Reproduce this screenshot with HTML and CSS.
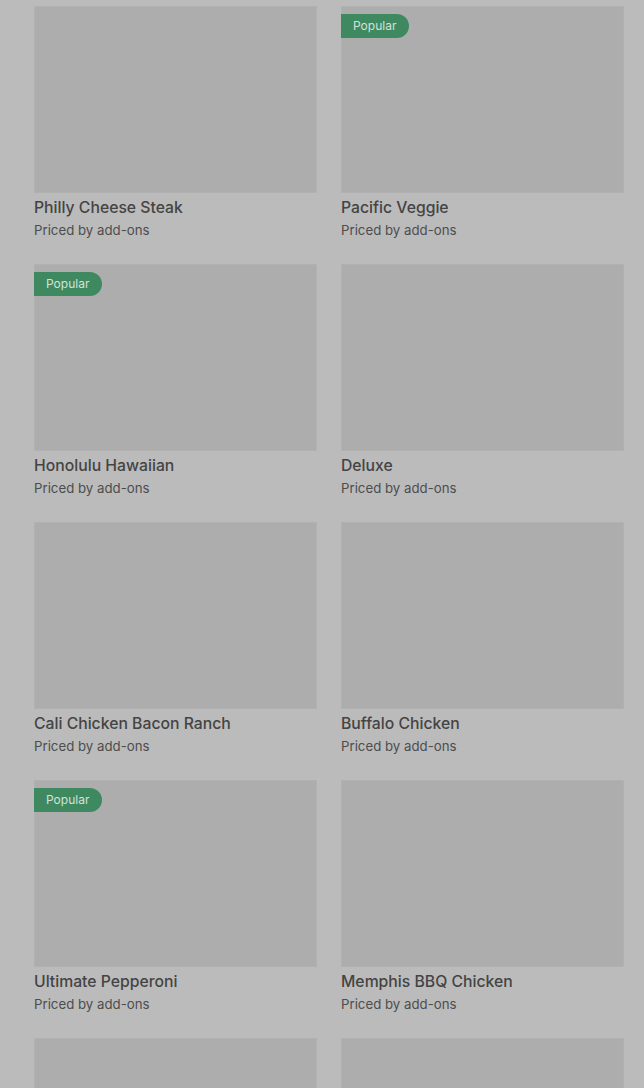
FILE: index.html
```html
<!DOCTYPE html>
<html lang="en">
<head>
  <meta charset="UTF-8">
  <meta name="viewport" content="width=device-width, initial-scale=1.0">
  <title>Menu</title>
  <link rel="stylesheet" href="styles.css">
</head>
<body>
  <div class="grid">
    <div class="item">
      <div class="thumb"></div>
      <h3>Philly Cheese Steak</h3>
      <p>Priced by add-ons</p>
    </div>
    <div class="item">
      <div class="thumb"><span class="badge">Popular</span></div>
      <h3>Pacific Veggie</h3>
      <p>Priced by add-ons</p>
    </div>
    <div class="item">
      <div class="thumb"><span class="badge">Popular</span></div>
      <h3>Honolulu Hawaiian</h3>
      <p>Priced by add-ons</p>
    </div>
    <div class="item">
      <div class="thumb"></div>
      <h3>Deluxe</h3>
      <p>Priced by add-ons</p>
    </div>
    <div class="item">
      <div class="thumb"></div>
      <h3>Cali Chicken Bacon Ranch</h3>
      <p>Priced by add-ons</p>
    </div>
    <div class="item">
      <div class="thumb"></div>
      <h3>Buffalo Chicken</h3>
      <p>Priced by add-ons</p>
    </div>
    <div class="item">
      <div class="thumb"><span class="badge">Popular</span></div>
      <h3>Ultimate Pepperoni</h3>
      <p>Priced by add-ons</p>
    </div>
    <div class="item">
      <div class="thumb"></div>
      <h3>Memphis BBQ Chicken</h3>
      <p>Priced by add-ons</p>
    </div>
    <!-- next row, only the pictures show above the fold -->
    <div class="item">
      <div class="thumb"></div>
    </div>
    <div class="item">
      <div class="thumb"></div>
    </div>
  </div>
</body>
</html>
```

FILE: styles.css
```css
* { margin: 0; padding: 0; box-sizing: border-box; }
html, body {
  height: 100%;
  overflow: hidden;
}
body {
  background: #bbbbbb;
  font-family: Inter, Roboto, "Liberation Sans", sans-serif;
  padding: 6px 20px 0 34px;
}
.grid {
  display: grid;
  grid-template-columns: 283px 283px;
  column-gap: 24px;
  row-gap: 24px;
}
.thumb {
  height: 187px;
  background: #adadad;
  border: 1px solid #b1b1b1;
  position: relative;
}
.badge {
  position: absolute;
  top: 7px;
  left: -1px;
  height: 24px;
  padding: 0 13px 0 12px;
  line-height: 24px;
  font-size: 12px;
  color: #d3e2d8;
  background: #3f8961;
  border-radius: 0 12px 12px 0;
}
.item h3 {
  margin-top: 3px;
  font-size: 15.75px;
  font-weight: 500;
  line-height: 24px;
  color: #444;
}
.item p {
  font-size: 13.25px;
  line-height: 20px;
  color: #4d4d4d;
}
```
